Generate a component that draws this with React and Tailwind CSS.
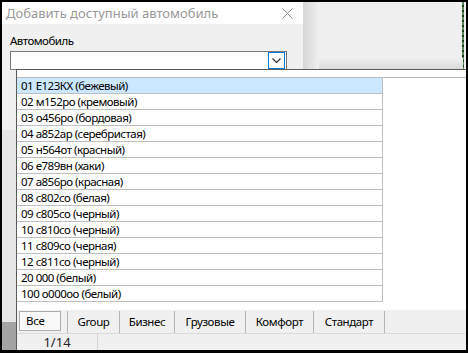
import React from "react";

const rows = [
  "01 E123КХ (бежевый)",
  "02 м152ро (кремовый)",
  "03 о456ро (бордовая)",
  "04 а852ар (серебристая)",
  "05 н564от (красный)",
  "06 е789вн (хаки)",
  "07 а856ро (красная)",
  "08 с802со (белая)",
  "09 с805со (черный)",
  "10 с810со (черный)",
  "11 с809со (черная)",
  "12 с811со (черный)",
  "20 000 (белый)",
  "100 о000оо (белый)",
];

const tabs = [
  { t: "Group", w: "w-[52px]" },
  { t: "Бизнес", w: "w-[55px]" },
  { t: "Грузовые", w: "w-[71px]" },
  { t: "Комфорт", w: "w-[68px]" },
  { t: "Стандарт", w: "w-[71px]" },
];

export default function App() {
  return (
    <div
      className="relative w-[468px] h-[353px] bg-black overflow-hidden text-[11.5px] text-black"
      style={{ fontFamily: '"Noto Sans", "Open Sans", sans-serif' }}
    >
      {/* desktop background */}
      <div className="absolute left-[2px] top-[2px] w-[464px] h-[348px] bg-[#efefef]" />
      {/* green dotted line */}
      <div className="absolute left-[462px] top-[2px] w-[2px] h-[68px] bg-[repeating-linear-gradient(180deg,#5c8a5c_0px,#5c8a5c_3px,#1f3a1f_3px,#1f3a1f_5px)]" />
      {/* top shadow above popup */}
      <div className="absolute left-[303px] top-[58px] w-[160px] h-[12px] bg-gradient-to-b from-[#efefef] to-[#d9d9d9]" />
      {/* dialog shadow */}
      <div className="absolute left-[303px] top-[2px] w-[16px] h-[68px] bg-gradient-to-r from-[#d6d6d6] to-[#efefef]" />

      {/* dialog */}
      <div className="absolute left-[2px] top-[2px] w-[301px] h-[320px] flex flex-col bg-[#f0f0f0]">
        <div className="h-[22px] bg-white flex items-center justify-between pl-[4px] pr-[10px] shrink-0">
          <span className="text-[13px] text-[#999999] leading-none">
            Добавить доступный автомобиль
          </span>
          <svg width="11" height="11" viewBox="0 0 11 11" className="mt-[1px]">
            <path d="M0.5 0.5 L10.5 10.5 M10.5 0.5 L0.5 10.5" stroke="#8c8c8c" strokeWidth="1" />
          </svg>
        </div>
        <div className="pl-[8px] pt-[11px]">
          <div className="leading-none h-[16px] tracking-[-0.5px]">Автомобиль</div>
          <div className="w-[277px] h-[19px] border border-[#7a7a7a] bg-white flex justify-end items-center pr-[1px]">
            <div className="w-[17px] h-[17px] border border-[#0078d7] bg-white flex items-center justify-center">
              <svg width="9" height="5" viewBox="0 0 9 5">
                <path d="M0.5 0.5 L4.5 4.5 L8.5 0.5" stroke="#333" strokeWidth="1.2" fill="none" />
              </svg>
            </div>
          </div>
        </div>
      </div>

      {/* lower left area */}
      <div className="absolute left-[2px] top-[322px] w-[14px] h-[28px] bg-[#a3a3a3]" />
      <div className="absolute left-[2px] top-[130px] w-[14px] h-[192px] bg-[#e6e6e6]" />

      {/* popup */}
      <div className="absolute left-[16px] top-[69px] w-[450px] h-[281px] border-l border-t border-[#5a5a5a] bg-white flex flex-col">
        <div className="h-[7px] shrink-0" />
        <div className="border-t border-[#b9b9b9] flex-1">
          {rows.map((r, i) => (
            <div
              key={r}
              className={`w-[366px] h-[16px] border-b border-r border-[#bfbfbf] flex items-center pl-[4px] leading-none tracking-[-0.5px] ${
                i === 0 ? "bg-[#cce8ff]" : "bg-white"
              }`}
            >
              {r}
            </div>
          ))}
        </div>
        <div className="h-[24px] bg-[#f0f0f0] flex items-start pl-[2px] pt-[1px] shrink-0 border-b border-[#dadada]">
          <div className="w-[42px] h-[20px] border border-[#adadad] bg-[#f9f9f9] flex items-center pl-[6px] leading-none mr-[6px] tracking-[-0.3px]">
            Все
          </div>
          {tabs.map((t) => (
            <div
              key={t.t}
              className={`${t.w} h-[22px] border-l border-[#b4b4b4] flex items-center justify-center leading-none tracking-[-0.4px]`}
            >
              {t.t}
            </div>
          ))}
          <div className="h-[22px] border-l border-[#b4b4b4]" />
        </div>
        <div className="h-[16px] bg-[#f0f0f0] flex items-center shrink-0">
          <div className="w-[81px] h-full border-r border-[#d4d4d4] flex items-center justify-center leading-none text-[13px] text-[#222]">
            1/14
          </div>
        </div>
      </div>
    </div>
  );
}
